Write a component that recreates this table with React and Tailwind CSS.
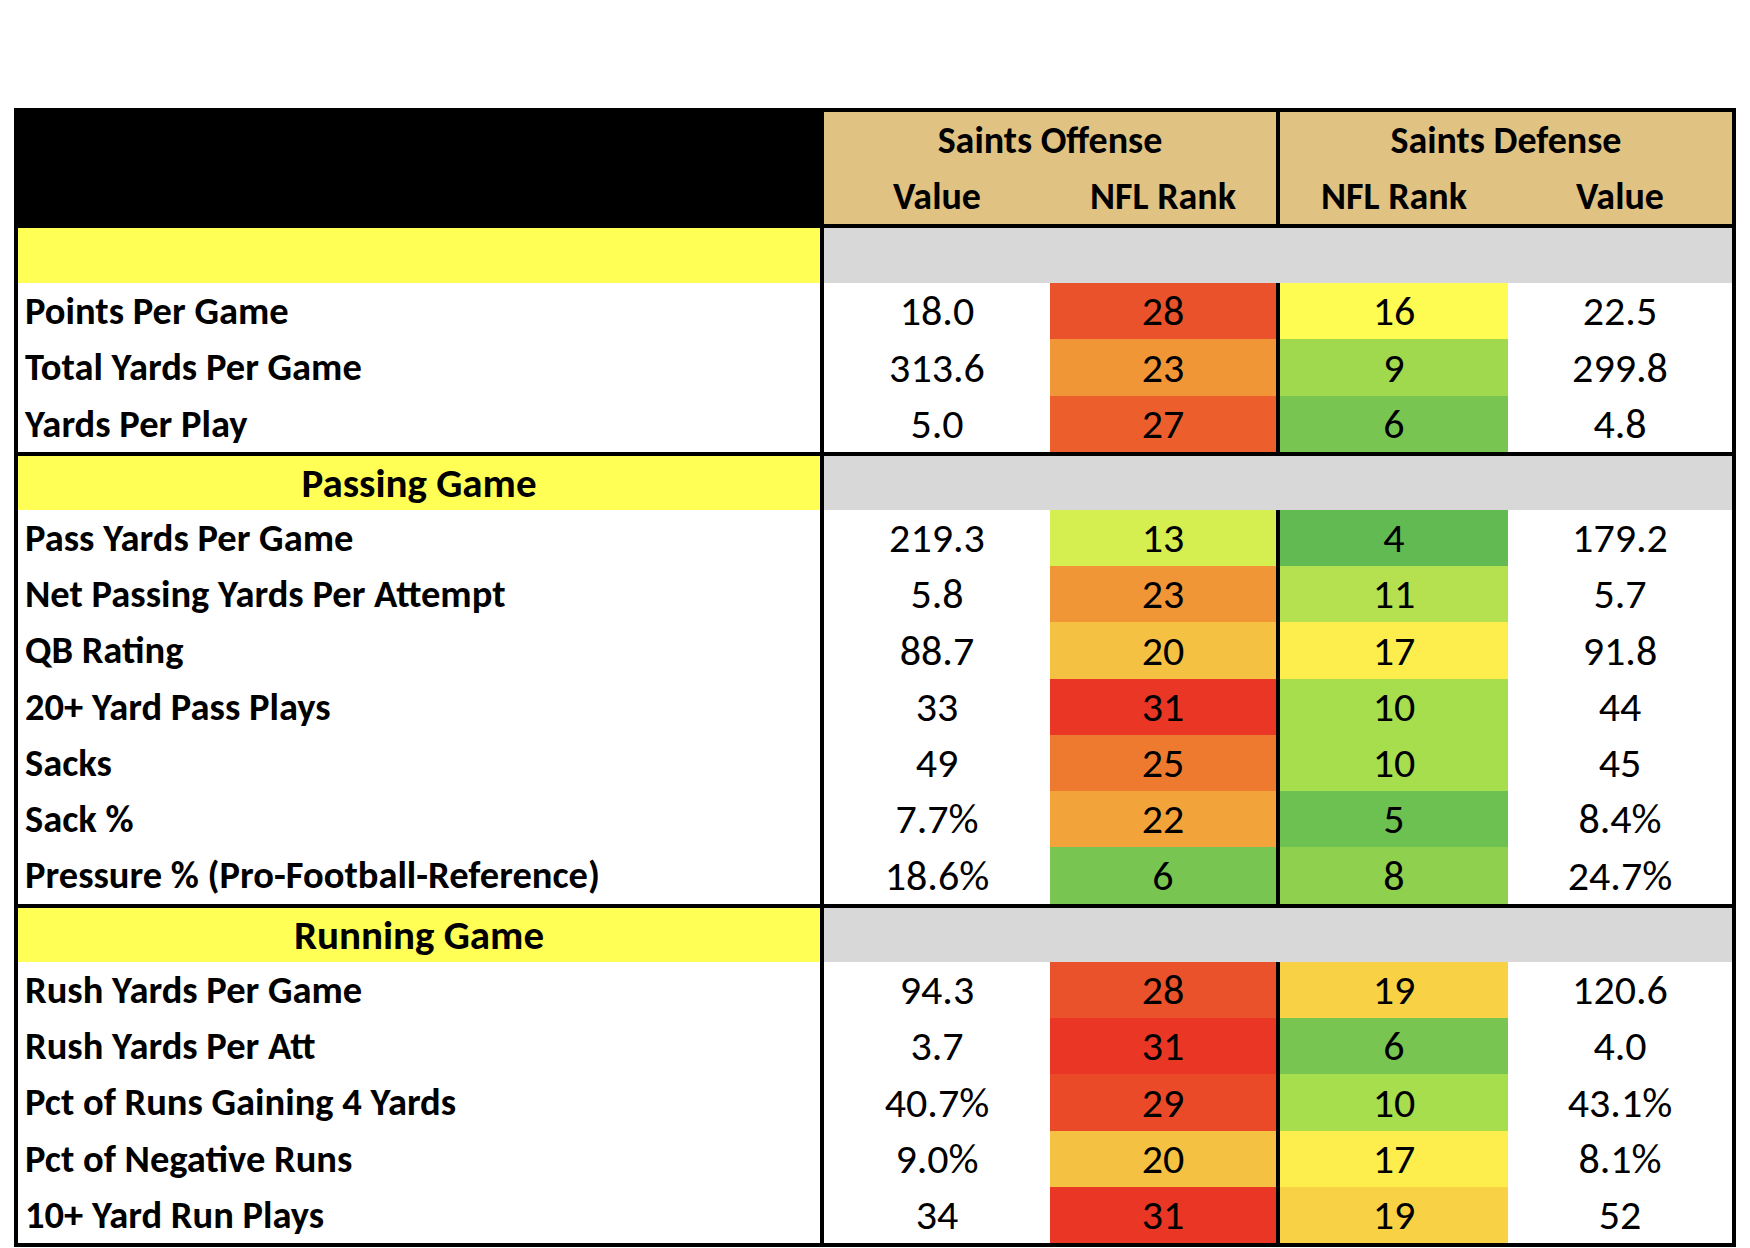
import React from 'react';

const font = { fontFamily: 'Carlito, Lato, "Liberation Sans", sans-serif' };

// rank colours as they sit in the sheet (offense rank, defense rank)
const sections = [
  {
    title: '',
    rows: [
      { label: 'Points Per Game', ov: '18.0', or: 28, oc: 'bg-[#e9522a]', dr: 16, dc: 'bg-[#fefb52]', dv: '22.5', h: 'h-[56px]' },
      { label: 'Total Yards Per Game', ov: '313.6', or: 23, oc: 'bg-[#f09637]', dr: 9, dc: 'bg-[#a0d94e]', dv: '299.8', h: 'h-[57px]' },
      { label: 'Yards Per Play', ov: '5.0', or: 27, oc: 'bg-[#ec5f2d]', dr: 6, dc: 'bg-[#78c651]', dv: '4.8', h: 'h-[56px]' },
    ],
    titleH: 'h-[55px]',
  },
  {
    title: 'Passing Game',
    rows: [
      { label: 'Pass Yards Per Game', ov: '219.3', or: 13, oc: 'bg-[#d5ee50]', dr: 4, dc: 'bg-[#62bb52]', dv: '179.2', h: 'h-[56px]' },
      { label: 'Net Passing Yards Per Attempt', ov: '5.8', or: 23, oc: 'bg-[#f09637]', dr: 11, dc: 'bg-[#b5e150]', dv: '5.7', h: 'h-[56px]' },
      { label: 'QB Rating', ov: '88.7', or: 20, oc: 'bg-[#f5c142]', dr: 17, dc: 'bg-[#fdee4e]', dv: '91.8', h: 'h-[57px]' },
      { label: '20+ Yard Pass Plays', ov: '33', or: 31, oc: 'bg-[#e93625]', dr: 10, dc: 'bg-[#a6de4e]', dv: '44', h: 'h-[56px]' },
      { label: 'Sacks', ov: '49', or: 25, oc: 'bg-[#ee7a30]', dr: 10, dc: 'bg-[#a6de4e]', dv: '45', h: 'h-[56px]' },
      { label: 'Sack %', ov: '7.7%', or: 22, oc: 'bg-[#f2a33a]', dr: 5, dc: 'bg-[#6cc151]', dv: '8.4%', h: 'h-[56px]' },
      { label: 'Pressure % (Pro-Football-Reference)', ov: '18.6%', or: 6, oc: 'bg-[#78c651]', dr: 8, dc: 'bg-[#8fd04e]', dv: '24.7%', h: 'h-[57px]' },
    ],
    titleH: 'h-[54px]',
  },
  {
    title: 'Running Game',
    rows: [
      { label: 'Rush Yards Per Game', ov: '94.3', or: 28, oc: 'bg-[#e9522a]', dr: 19, dc: 'bg-[#f8d144]', dv: '120.6', h: 'h-[56px]' },
      { label: 'Rush Yards Per Att', ov: '3.7', or: 31, oc: 'bg-[#e93625]', dr: 6, dc: 'bg-[#78c651]', dv: '4.0', h: 'h-[56px]' },
      { label: 'Pct of Runs Gaining 4 Yards', ov: '40.7%', or: 29, oc: 'bg-[#ea4a28]', dr: 10, dc: 'bg-[#a6de4e]', dv: '43.1%', h: 'h-[57px]' },
      { label: 'Pct of Negative Runs', ov: '9.0%', or: 20, oc: 'bg-[#f5c142]', dr: 17, dc: 'bg-[#fdee4e]', dv: '8.1%', h: 'h-[56px]' },
      { label: '10+ Yard Run Plays', ov: '34', or: 31, oc: 'bg-[#e93625]', dr: 19, dc: 'bg-[#f8d144]', dv: '52', h: 'h-[56px]' },
    ],
    titleH: 'h-[54px]',
  },
];

const StatRow = ({ row }) => (
  <div className={`flex ${row.h}`}>
    <div className="w-[806px] flex items-center pl-[7px] text-[38.5px] font-bold text-black border-r-4 border-black whitespace-nowrap">
      {row.label}
    </div>
    <div className="w-[226px] flex items-center justify-center text-[42px] bg-white">{row.ov}</div>
    <div className={`w-[230px] flex items-center justify-center text-[42px] border-r-4 border-black ${row.oc}`}>{row.or}</div>
    <div className={`w-[228px] flex items-center justify-center text-[42px] ${row.dc}`}>{row.dr}</div>
    <div className="w-[224px] flex items-center justify-center text-[42px] bg-white">{row.dv}</div>
  </div>
);

const Section = ({ section, last }) => (
  <div className={last ? '' : 'border-b-4 border-black'}>
    <div className={`flex ${section.titleH}`}>
      <div className="w-[806px] flex items-center justify-center bg-[#ffff55] text-[41px] font-bold border-r-4 border-black">
        {section.title}
      </div>
      <div className="flex-1 bg-[#d8d8d8]" />
    </div>
    {section.rows.map((row) => (
      <StatRow key={row.label} row={row} />
    ))}
  </div>
);

export default function App() {
  return (
    <div className="bg-white w-[1750px] h-[1248px] pt-[108px] pl-[14px]" style={font}>
      <div className="w-[1722px] border-4 border-black text-black leading-none">
        {/* header */}
        <div className="flex h-[116px] border-b-4 border-black">
          <div className="w-[806px] bg-black" />
          <div className="w-[456px] bg-[#e0c283] flex flex-col border-r-4 border-black">
            <div className="h-[56px] flex items-center justify-center text-[38px] font-bold">Saints Offense</div>
            <div className="flex h-[56px]">
              <div className="w-[226px] flex items-center justify-center text-[38px] font-bold">Value</div>
              <div className="w-[226px] flex items-center justify-center text-[38px] font-bold">NFL Rank</div>
            </div>
          </div>
          <div className="w-[452px] bg-[#e0c283] flex flex-col">
            <div className="h-[56px] flex items-center justify-center text-[38px] font-bold">Saints Defense</div>
            <div className="flex h-[56px]">
              <div className="w-[228px] flex items-center justify-center text-[38px] font-bold">NFL Rank</div>
              <div className="w-[224px] flex items-center justify-center text-[38px] font-bold">Value</div>
            </div>
          </div>
        </div>
        {sections.map((s, i) => (
          <Section key={i} section={s} last={i === sections.length - 1} />
        ))}
      </div>
    </div>
  );
}
